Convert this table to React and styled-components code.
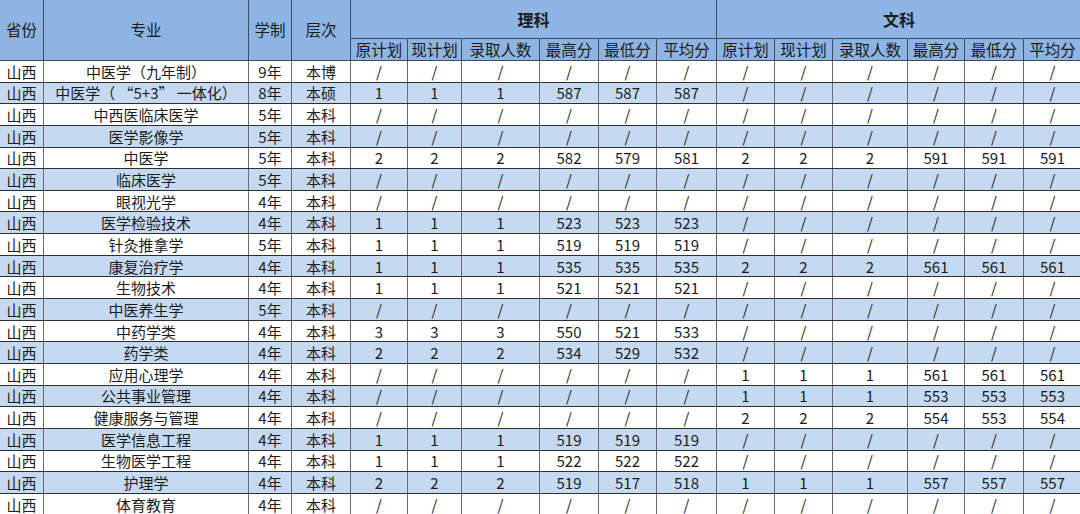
import React from "react";
import styled, { createGlobalStyle } from "styled-components";

const Global = createGlobalStyle`
  html, body { margin: 0; padding: 0; background: #ffffff; overflow: hidden; }
  body { font-family: "Noto Sans CJK SC", "Noto Sans", sans-serif; }
`;

const Sheet = styled.div`
  width: 1080px;
  height: 514px;
  overflow: hidden;
  background: #ffffff;
`;

const Table = styled.table`
  border-collapse: collapse;
  table-layout: fixed;
  width: 1082px;
  margin-left: -1px;
  margin-top: -1px;
  color: #1b1b1b;
  font-size: 15px;
`;

const HeadRow = styled.tr`
  height: ${(p) => p.$h}px;
  background: #8db4e2;
`;

const Th = styled.th`
  border: 1px solid #3f4a5a;
  font-weight: ${(p) => (p.$bold ? 700 : 400)};
  font-size: ${(p) => (p.$bold ? 16 : 15.5)}px;
  line-height: 1;
  padding: 0;
  text-align: center;
  vertical-align: middle;
  white-space: nowrap;
  overflow: hidden;
  color: #1b1b1b;
`;

const Row = styled.tr`
  height: 21.65px;
  background: ${(p) => (p.$alt ? "#c5d9f1" : "#ffffff")};
`;

const Td = styled.td`
  border-top: 1px solid #2e2e2e;
  border-bottom: 1px solid #2e2e2e;
  border-left: 1px solid #6a6a6a;
  border-right: 1px solid #6a6a6a;
  padding: 0;
  line-height: 1;
  text-align: center;
  vertical-align: middle;
  white-space: pre;
  overflow: hidden;
`;

const widths = [44, 205, 43, 59, 57, 54, 78, 59, 58, 60, 58, 58, 75, 57, 59, 58];

const subCols = ["原计划", "现计划", "录取人数", "最高分", "最低分", "平均分"];

const S = ["/", "/", "/", "/", "/", "/"];

const rows = [
  ["中医学（九年制）", "9年", "本博", S, S],
  ["中医学（ “5+3” 一体化）", "8年", "本硕", ["1", "1", "1", "587", "587", "587"], S],
  ["中西医临床医学", "5年", "本科", S, S],
  ["医学影像学", "5年", "本科", S, S],
  ["中医学", "5年", "本科", ["2", "2", "2", "582", "579", "581"], ["2", "2", "2", "591", "591", "591"]],
  ["临床医学", "5年", "本科", S, S],
  ["眼视光学", "4年", "本科", S, S],
  ["医学检验技术", "4年", "本科", ["1", "1", "1", "523", "523", "523"], S],
  ["针灸推拿学", "5年", "本科", ["1", "1", "1", "519", "519", "519"], S],
  ["康复治疗学", "4年", "本科", ["1", "1", "1", "535", "535", "535"], ["2", "2", "2", "561", "561", "561"]],
  ["生物技术", "4年", "本科", ["1", "1", "1", "521", "521", "521"], S],
  ["中医养生学", "5年", "本科", S, S],
  ["中药学类", "4年", "本科", ["3", "3", "3", "550", "521", "533"], S],
  ["药学类", "4年", "本科", ["2", "2", "2", "534", "529", "532"], S],
  ["应用心理学", "4年", "本科", S, ["1", "1", "1", "561", "561", "561"]],
  ["公共事业管理", "4年", "本科", S, ["1", "1", "1", "553", "553", "553"]],
  ["健康服务与管理", "4年", "本科", S, ["2", "2", "2", "554", "553", "554"]],
  ["医学信息工程", "4年", "本科", ["1", "1", "1", "519", "519", "519"], S],
  ["生物医学工程", "4年", "本科", ["1", "1", "1", "522", "522", "522"], S],
  ["护理学", "4年", "本科", ["2", "2", "2", "519", "517", "518"], ["1", "1", "1", "557", "557", "557"]],
  ["体育教育", "4年", "本科", S, S],
];

export default function App() {
  return (
    <Sheet>
      <Global />
      <Table>
        <colgroup>
          {widths.map((w, i) => (
            <col key={i} style={{ width: w }} />
          ))}
        </colgroup>
        <thead>
          <HeadRow $h={39}>
            <Th rowSpan={2}>省份</Th>
            <Th rowSpan={2}>专业</Th>
            <Th rowSpan={2}>学制</Th>
            <Th rowSpan={2}>层次</Th>
            <Th colSpan={6} $bold>理科</Th>
            <Th colSpan={6} $bold>文科</Th>
          </HeadRow>
          <HeadRow $h={22}>
            {subCols.map((c) => (
              <Th key={"l" + c}>{c}</Th>
            ))}
            {subCols.map((c) => (
              <Th key={"w" + c}>{c}</Th>
            ))}
          </HeadRow>
        </thead>
        <tbody>
          {rows.map((r, i) => (
            <Row key={i} $alt={i % 2 === 1}>
              <Td>山西</Td>
              <Td>{r[0]}</Td>
              <Td>{r[1]}</Td>
              <Td>{r[2]}</Td>
              {r[3].map((v, j) => (
                <Td key={"l" + j}>{v}</Td>
              ))}
              {r[4].map((v, j) => (
                <Td key={"w" + j}>{v}</Td>
              ))}
            </Row>
          ))}
        </tbody>
      </Table>
    </Sheet>
  );
}
